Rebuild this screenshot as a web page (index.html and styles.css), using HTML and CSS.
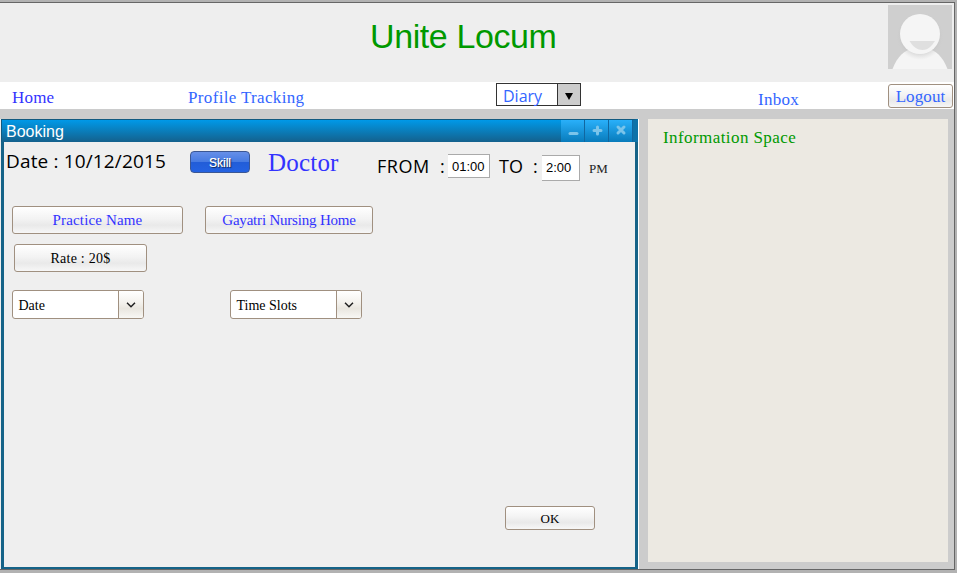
FILE: index.html
```html
<!DOCTYPE html>
<html lang="en">
<head>
<meta charset="utf-8">
<title>Unite Locum</title>
<link rel="stylesheet" href="styles.css">
</head>
<body>
<div class="app">
  <header class="banner">
    <h1>Unite Locum</h1>
    <svg class="avatar" viewBox="0 0 64 64" width="64" height="64">
      <defs><radialGradient id="shade"><stop offset=".75" stop-color="#bdbdbd"/><stop offset="1" stop-color="#cfcfcf" stop-opacity="0"/></radialGradient></defs>
      <rect width="64" height="64" fill="#cfcfcf"/>
      <path d="M4.500 64C9 52 17 44 25 44H39C47 44 55 52 59.500 64Z" fill="#f5f5f5"/>
      <circle cx="32" cy="31" r="24" fill="url(#shade)" opacity=".45"/>
      <circle cx="32" cy="29" r="20" fill="#f5f5f5"/>
      <path d="M21.500 36H47C43 42 39.500 45 34.500 45S25 42 21.500 36Z" fill="#dfdfdf"/>
    </svg>
  </header>
  <nav class="nav">
    <a class="home">Home</a>
    <a class="profile">Profile Tracking</a>
    <div class="diary"><span>Diary</span><i><svg width="8" height="7" viewBox="0 0 8 7"><path d="M0 0H8L4 7Z"/></svg></i></div>
    <a class="inbox">Inbox</a>
    <button class="btn logout">Logout</button>
  </nav>
  <main class="main">
    <section class="window">
      <div class="titlebar">
        <span class="title">Booking</span>
        <span class="ctl"><svg width="24" height="21" viewBox="0 0 24 21"><path d="M9 13.500H16" stroke-width="3"/></svg></span>
        <span class="ctl"><svg width="24" height="21" viewBox="0 0 24 21"><path d="M9 10.500H16M12.500 7V14" stroke-width="3"/></svg></span>
        <span class="ctl"><svg width="24" height="21" viewBox="0 0 24 21"><path d="M9 7L15 13M15 7L9 13" stroke-width="3"/></svg></span>
      </div>
      <div class="body">
        <div class="when">
          <span class="date">Date : 10/12/2015</span>
          <button class="skill">Skill</button>
          <span class="doctor">Doctor</span>
          <span class="label from">FROM</span><span class="label colon">:</span>
          <span class="time start">01:00</span>
          <span class="label to">TO</span><span class="label colon second">:</span>
          <span class="time end">2:00</span>
          <span class="pm">PM</span>
        </div>
        <div class="place">
          <button class="btn practice">Practice Name</button>
          <button class="btn nursing">Gayatri Nursing Home</button>
        </div>
        <button class="btn rate">Rate : 20$</button>
        <div class="selects">
          <div class="select"><span>Date</span><i><svg width="10" height="6" viewBox="0 0 10 6"><path d="M1 .7L5 4.700L9 .7"/></svg></i></div>
          <div class="select slots"><span>Time Slots</span><i><svg width="10" height="6" viewBox="0 0 10 6"><path d="M1 .7L5 4.700L9 .7"/></svg></i></div>
        </div>
        <button class="btn ok">OK</button>
      </div>
    </section>
    <aside class="info">Information Space</aside>
  </main>
</div>
</body>
</html>
```
FILE: styles.css
```css
* { box-sizing: border-box; }
body { margin: 0; width: 957px; height: 573px; overflow: hidden; background: #b2b2b2; font-family: "Liberation Serif", serif; }
h1 { margin: 0; font-weight: normal; }
button { padding: 0; font-family: inherit; }
svg { display: block; }
span, a, button { white-space: nowrap; }
.app { width: 955px; height: 568px; margin-top: 2px; border: solid #666; border-width: 1px 1px 1px 0; background: #ccc; }
.banner { display: flex; height: 79px; background: #eee; }
.banner h1 { width: 518px; margin-left: 370px; padding-top: 13px; font: 34px/40px "Liberation Sans", sans-serif; color: #090; letter-spacing: -.4px; }
.avatar { margin-top: 2px; }
.nav { display: flex; height: 27px; background: #fff; color: #36f; font-size: 17px; line-height: 20px; }
.home { width: 176px; margin-left: 12px; padding-top: 6px; color: #33f; letter-spacing: .2px; }
.profile { width: 308px; padding-top: 6px; letter-spacing: .34px; }
.diary { display: flex; width: 85px; height: 23px; margin-top: 1px; border: 1px solid #333; }
.diary span { width: 60px; padding-left: 6px; font: 16px/24px "Open Sans", sans-serif; }
.diary i { display: grid; place-items: center; flex: 1; padding-top: 3px; background: #ccc; border-left: 1px solid #333; }
.inbox { width: 130px; margin-left: 177px; padding-top: 8px; letter-spacing: .3px; }
.btn { border: 1px solid #a09080; border-radius: 3px; background: linear-gradient(#fff, #f3f3f3 45%, #e9e9e9 70%, #f7f7f7); color: #000; font-size: 15px; }
.logout { width: 65px; height: 24px; margin-top: 2px; padding-top: 1px; color: #36f; font-size: 17px; line-height: 21px; letter-spacing: .1px; }
.main { display: flex; padding-top: 10px; height: 460px; }
.window { display: flex; flex-direction: column; width: 639px; height: 450px; padding-left: 1px; border-right: 1px solid #fff; background: #eee; }
.titlebar { display: flex; height: 23px; border: solid #125a80; border-width: 1px 0 0 1px; border-right: 5px solid #0d72a9; background: linear-gradient(#0099e8, #14618d); }
.title { flex: 1; padding-left: 4px; color: #fff; font: 16px/23px "Liberation Sans", sans-serif; }
.ctl { width: 24px; border-right: 1px solid #1167a0; background: linear-gradient(#29b0fa, #087bbb); }
.ctl path { stroke: #7ac4ea; stroke-linecap: round; }
.body { flex: 1; border: solid #156388; border-width: 0 3px 2px; background: #efefef; }
.window + .info { margin-left: 9px; }
.when { display: flex; height: 64px; padding-left: 2px; }
.date { width: 184px; padding-top: 6px; font: 19px/27px "Open Sans", sans-serif; letter-spacing: .15px; }
.skill { width: 60px; height: 22px; margin-top: 9px; border: 1px solid #3b5794; border-radius: 4px; background: linear-gradient(#668fe8, #477be2 48%, #225dd8 52%, #2462e2); color: #fff; font: 12px/22px "Liberation Sans", sans-serif; text-shadow: 1px 1px 1px #124, .3px 0 #fff; }
.doctor { width: 109px; margin-left: 18px; padding-top: 6px; color: #33f; font-size: 25px; line-height: 30px; letter-spacing: .2px; }
.label { padding-top: 10px; font: 18px/28px "Open Sans", sans-serif; }
.from { width: 63px; letter-spacing: .5px; }
.colon { width: 8px; }
.time { height: 24px; margin-top: 12px; border: 1px solid #aaa; border-left: 0; background: #fff; padding-left: 4px; font: 13px/23px "Liberation Sans", sans-serif; }
.start { width: 42px; }
.to { width: 34px; margin-left: 9px; }
.end { width: 38px; height: 26px; margin-top: 13px; line-height: 24px; }
.second { width: 9px; }
.pm { margin-left: 9px; padding-top: 18px; color: #222; font-size: 13px; line-height: 17px; }
.place { display: flex; gap: 22px; height: 38px; padding-left: 8px; }
.place .btn { height: 28px; color: #33f; }
.place .practice { width: 171px; letter-spacing: .15px; }
.place .nursing { width: 168px; letter-spacing: -.2px; }
.rate { display: block; width: 133px; height: 28px; margin-left: 10px; padding-top: 1px; font-size: 14px; letter-spacing: .25px; }
.selects { display: flex; gap: 86px; margin: 18px 0 0 8px; }
.select { display: flex; width: 132px; height: 29px; border: 1px solid #a09080; border-radius: 3px; overflow: hidden; background: #fff; font-size: 14px; line-height: 29px; }
.select span { width: 105px; padding-left: 5.5px; }
.select i { display: grid; place-items: center; flex: 1; border-left: 1px solid #a09080; background: linear-gradient(#fff, #f3f1ec 45%, #e9e6df 65%, #f8f7f4); }
.select path { fill: none; stroke: #222; stroke-width: 1.500; }
.ok { display: block; width: 90px; height: 24px; margin: 187px 0 0 501px; padding-top: 1px; font-size: 13px; }
.info { width: 300px; height: 443px; padding: 8px 15px; background: #ece9e2; color: #090; font-size: 17px; line-height: 21px; letter-spacing: .42px; }
```
